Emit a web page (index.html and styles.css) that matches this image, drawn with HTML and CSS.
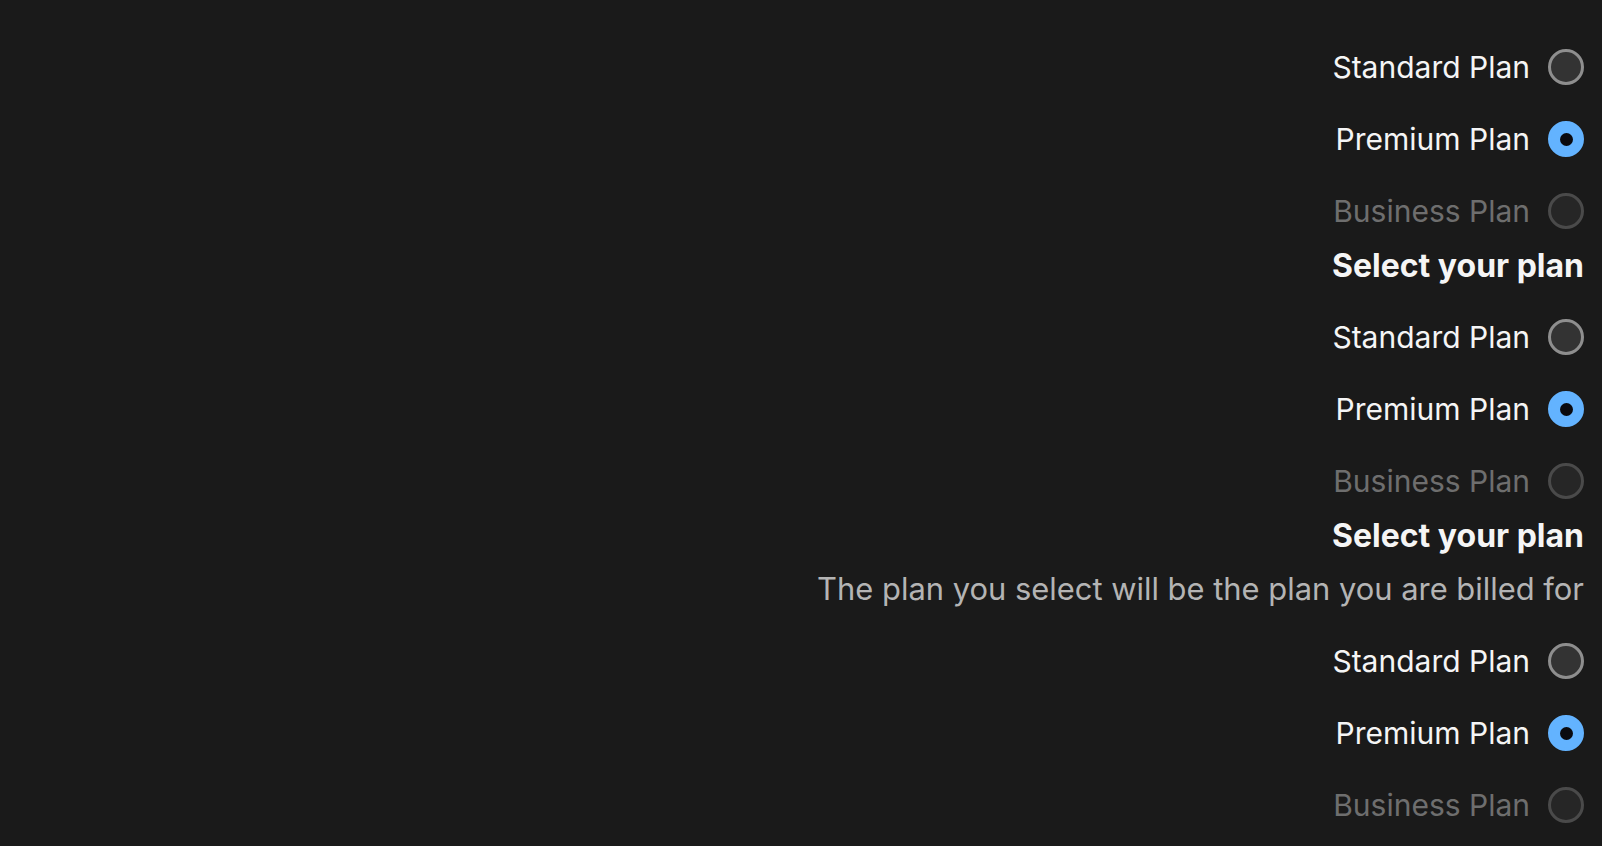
FILE: index.html
```html
<!DOCTYPE html>
<html lang="en">
<head>
<meta charset="utf-8">
<title>Select your plan</title>
<link rel="stylesheet" href="styles.css">
</head>
<body>
<main class="page">
  <div class="group" role="radiogroup">
    <label class="row"><span class="text">Standard Plan</span><span class="radio"></span></label>
    <label class="row"><span class="text">Premium Plan</span><span class="radio checked"></span></label>
    <label class="row disabled"><span class="text">Business Plan</span><span class="radio"></span></label>
  </div>
  <div class="group" role="radiogroup">
    <div class="heading">Select your plan</div>
    <label class="row"><span class="text">Standard Plan</span><span class="radio"></span></label>
    <label class="row"><span class="text">Premium Plan</span><span class="radio checked"></span></label>
    <label class="row disabled"><span class="text">Business Plan</span><span class="radio"></span></label>
  </div>
  <div class="group" role="radiogroup">
    <div class="heading">Select your plan</div>
    <div class="desc">The plan you select will be the plan you are billed for</div>
    <label class="row"><span class="text">Standard Plan</span><span class="radio"></span></label>
    <label class="row"><span class="text">Premium Plan</span><span class="radio checked"></span></label>
    <label class="row disabled"><span class="text">Business Plan</span><span class="radio"></span></label>
  </div>
</main>
</body>
</html>
```
FILE: styles.css
```css
html, body {
  margin: 0;
  padding: 0;
  background: #1a1a1a;
  height: 100%;
  overflow: hidden;
}
body {
  font-family: Inter, "Noto Sans", sans-serif;
  color: #f5f5f5;
}
.page {
  display: flex;
  flex-direction: column;
  align-items: flex-end;
  padding: 31px 18px 0 0;
}
.group {
  display: flex;
  flex-direction: column;
  align-items: flex-end;
}
.heading {
  font-size: 32px;
  font-weight: 700;
  line-height: 38px;
  margin-top: 0;
  margin-bottom: 16px;
  color: #f5f5f5;
}
.desc {
  font-size: 30.9px;
  line-height: 36px;
  color: #b4b4b4;
  margin-top: 0;
  margin-bottom: 18px;
}
.row {
  height: 72px;
  display: flex;
  align-items: center;
  gap: 18px;
  font-size: 30px;
}
.text {
  color: #f5f5f5;
}
.radio {
  box-sizing: border-box;
  width: 36px;
  height: 36px;
  border-radius: 50%;
  border: 3px solid #8e8e8e;
  background: #333333;
  display: flex;
  align-items: center;
  justify-content: center;
}
.radio.checked {
  background: #63b3ff;
  border-color: #63b3ff;
}
.radio.checked::after {
  content: "";
  width: 13px;
  height: 13px;
  border-radius: 50%;
  background: #0a0a0f;
}
.row.disabled .text {
  color: #6e6e6e;
}
.row.disabled .radio {
  border-color: #4a4a4a;
  background: #262626;
}
```
